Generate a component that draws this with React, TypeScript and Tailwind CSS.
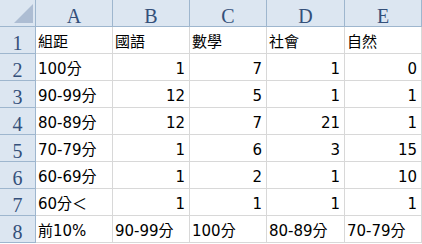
const cols = ["A", "B", "C", "D", "E"];

type Cell = string | number;

const rows: Cell[][] = [
  ["組距", "國語", "數學", "社會", "自然"],
  ["100分", 1, 7, 1, 0],
  ["90-99分", 12, 5, 1, 1],
  ["80-89分", 12, 7, 21, 1],
  ["70-79分", 1, 6, 3, 15],
  ["60-69分", 1, 2, 1, 10],
  ["60分＜", 1, 1, 1, 1],
  ["前10%", "90-99分", "100分", "80-89分", "70-79分"],
];

const headCell =
  "h-[27px] border-r border-b border-[#9eb6ce] bg-[#dce6f1] text-[#34507a] text-[20px] leading-[18px] pt-[7px] text-center overflow-hidden font-['Liberation_Serif',serif]";

export default function App() {
  return (
    <div className="w-[422px] h-[244px] bg-white overflow-hidden">
      <div className="grid grid-cols-[36px_77px_77px_77px_78px_77px]">
        {/* corner with the select-all triangle */}
        <div className="h-[27px] border-r border-b border-[#9eb6ce] bg-[#dce6f1] relative">
          <svg className="absolute left-[14px] top-[4px]" width="19" height="19" viewBox="0 0 19 19">
            <polygon points="19,0 19,19 0,19" fill="#adbdd3" />
          </svg>
        </div>
        {cols.map((c) => (
          <div key={c} className={headCell}>
            {c}
          </div>
        ))}

        {rows.map((r, i) => (
          <div key={i} className="contents">
            <div className={headCell}>{i + 1}</div>
            {r.map((v, j) => (
              <div
                key={j}
                className={`h-[27px] border-r border-b border-[#d8d8d8] text-[15px] leading-[21px] pt-[5px] text-black whitespace-nowrap overflow-hidden font-['DejaVu_Sans','Noto_Sans_CJK_TC',sans-serif] ${
                  typeof v === "number" ? "text-right pr-[4px]" : "pl-[2px]"
                }`}
              >
                {v}
              </div>
            ))}
          </div>
        ))}
      </div>
    </div>
  );
}
